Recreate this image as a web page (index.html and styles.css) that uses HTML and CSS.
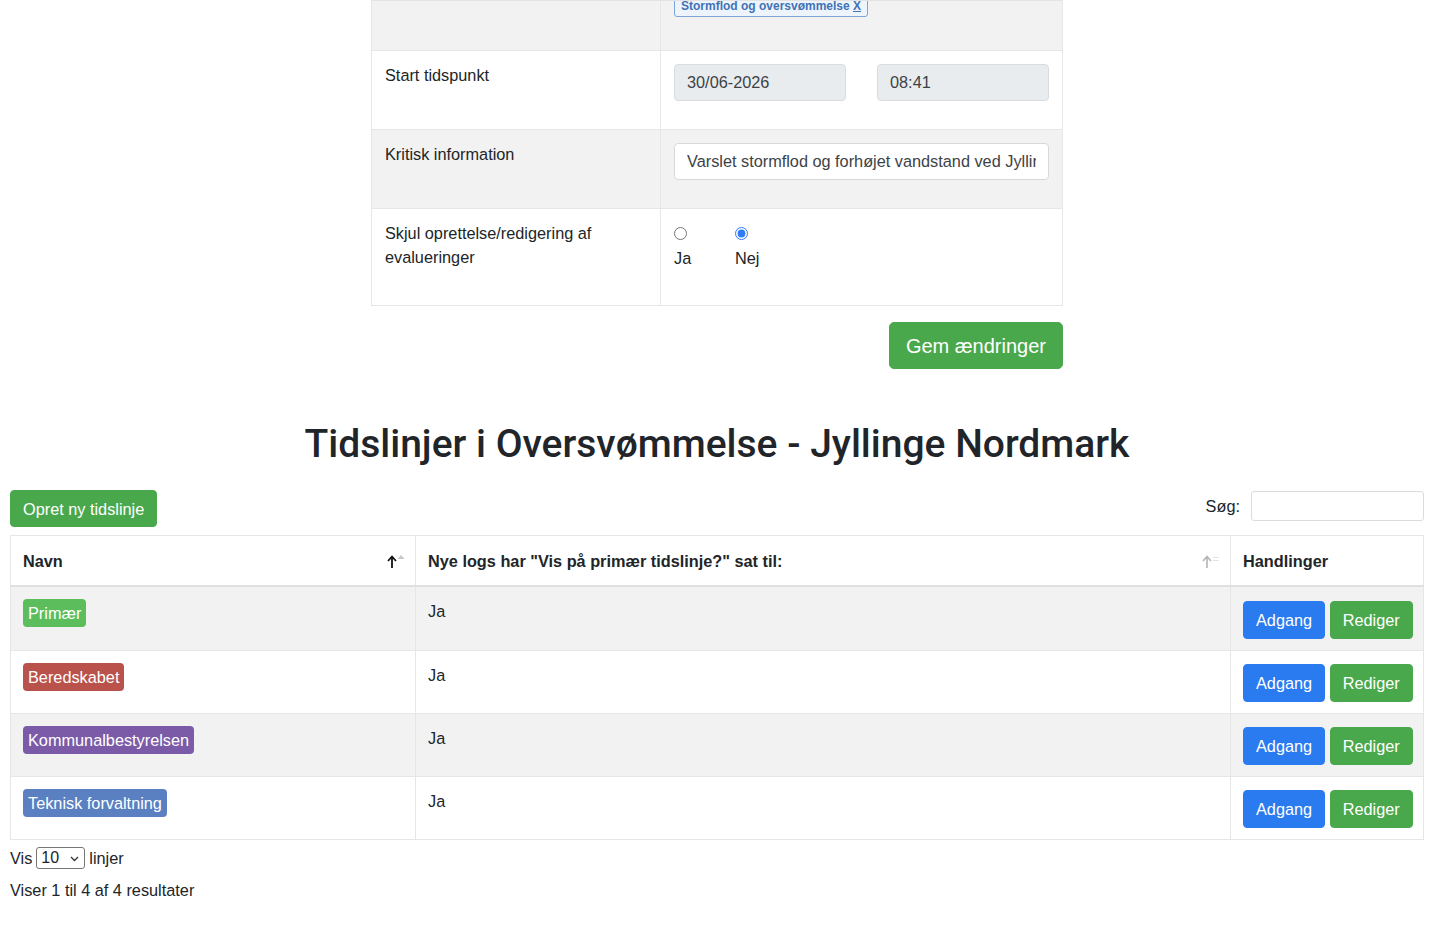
FILE: index.html
```html
<!DOCTYPE html>
<html lang="da">
<head>
<meta charset="utf-8">
<title>Tidslinjer</title>
<link rel="stylesheet" href="styles.css">
</head>
<body>
<div class="page">
  <section class="form-wrap">
    <table class="form-table">
      <colgroup><col class="col-label"><col></colgroup>
      <tbody>
        <tr class="row-tags">
          <td class="label"></td>
          <td class="value"><span class="tag">Stormflod og oversvømmelse <u>X</u></span></td>
        </tr>
        <tr>
          <td class="label">Start tidspunkt</td>
          <td class="value">
            <div class="two-col">
              <input class="field field-readonly" type="text" value="30/06-2026" readonly>
              <input class="field field-readonly" type="text" value="08:41" readonly>
            </div>
          </td>
        </tr>
        <tr>
          <td class="label">Kritisk information</td>
          <td class="value"><input class="field" type="text" value="Varslet stormflod og forhøjet vandstand ved Jyllinge Nordmark"></td>
        </tr>
        <tr class="row-radio">
          <td class="label">Skjul oprettelse/redigering af evalueringer</td>
          <td class="value">
            <div class="radios">
              <label class="radio-opt"><input type="radio" name="skjul"><span>Ja</span></label>
              <label class="radio-opt"><input type="radio" name="skjul" checked><span>Nej</span></label>
            </div>
          </td>
        </tr>
      </tbody>
    </table>
    <div class="form-actions">
      <button class="btn btn-success btn-lg" type="button">Gem ændringer</button>
    </div>
  </section>

  <h1 class="title">Tidslinjer i Oversvømmelse - Jyllinge Nordmark</h1>

  <div class="toolbar">
    <button class="btn btn-success" type="button">Opret ny tidslinje</button>
    <label class="search">Søg: <input type="search" class="search-input"></label>
  </div>

  <table class="data-table">
    <colgroup><col class="c-navn"><col><col class="c-act"></colgroup>
    <thead>
      <tr>
        <th><div class="th-inner"><span>Navn</span>
          <svg class="sort" width="20" height="16" viewBox="0 0 20 16"><path d="M6 15V4M2 8L6 3.5L10 8" fill="none" stroke="#111" stroke-width="1.8"/><path d="M11.5 6L15 2L18.5 6Z" fill="#c8c8c8"/></svg>
        </div></th>
        <th><div class="th-inner"><span>Nye logs har "Vis på primær tidslinje?" sat til:</span>
          <svg class="sort" width="20" height="16" viewBox="0 0 20 16"><path d="M6 15V4M2 8L6 3.5L10 8" fill="none" stroke="#b5b5b5" stroke-width="1.6"/><path d="M12 4.5H18M12 7.5H18" stroke="#e2e2e2" stroke-width="1"/></svg>
        </div></th>
        <th>Handlinger</th>
      </tr>
    </thead>
    <tbody>
      <tr>
        <td><span class="badge b-green">Primær</span></td>
        <td>Ja</td>
        <td class="actions"><button class="btn btn-primary" type="button">Adgang</button> <button class="btn btn-success" type="button">Rediger</button></td>
      </tr>
      <tr>
        <td><span class="badge b-red">Beredskabet</span></td>
        <td>Ja</td>
        <td class="actions"><button class="btn btn-primary" type="button">Adgang</button> <button class="btn btn-success" type="button">Rediger</button></td>
      </tr>
      <tr>
        <td><span class="badge b-purple">Kommunalbestyrelsen</span></td>
        <td>Ja</td>
        <td class="actions"><button class="btn btn-primary" type="button">Adgang</button> <button class="btn btn-success" type="button">Rediger</button></td>
      </tr>
      <tr>
        <td><span class="badge b-blue">Teknisk forvaltning</span></td>
        <td>Ja</td>
        <td class="actions"><button class="btn btn-primary" type="button">Adgang</button> <button class="btn btn-success" type="button">Rediger</button></td>
      </tr>
    </tbody>
  </table>

  <div class="length">
    <span>Vis</span>
    <span class="select-wrap">
      <select class="select"><option>10</option><option>25</option><option>50</option></select>
      <svg class="chev" width="9" height="6" viewBox="0 0 9 6"><path d="M1 1L4.5 4.5L8 1" fill="none" stroke="#333" stroke-width="1.3"/></svg>
    </span>
    <span>linjer</span>
  </div>
  <div class="info">Viser 1 til 4 af 4 resultater</div>
</div>
</body>
</html>
```

FILE: styles.css
```css
* { box-sizing: border-box; }

body {
  margin: 0;
  font-family: "Liberation Sans", Arial, sans-serif;
  font-size: 16.3px;
  line-height: 24px;
  color: #212529;
  background: #fff;
}

.page {
  padding: 0 16px 0 10px;
}

/* ---------- top form ---------- */
.form-wrap {
  width: 692px;
  margin: 0 auto;
}

.form-table {
  width: 100%;
  border-collapse: collapse;
  table-layout: fixed;
  border: 1px solid #e3e3e3;
}

.col-label { width: 289px; }

.form-table td {
  border: 1px solid #e6e6e6;
  padding: 12px 13px 29px;
  vertical-align: top;
}

.form-table td.value { padding-top: 13px; padding-bottom: 28px; }

.form-table tr:nth-child(odd) td { background: #f2f2f2; }
.form-table tr:nth-child(even) td { background: #fff; }

.form-table .row-tags td {
  height: 50px;
  padding-top: 0;
  padding-bottom: 0;
  border-top: 0;
}

.form-table .row-radio td.value { padding-bottom: 35px; }
.form-table .row-radio td.label { padding-bottom: 36px; }

.tag {
  display: block;
  width: max-content;
  margin-top: -6px;
  padding: 1px 6px;
  font-size: 12px;
  line-height: 18px;
  font-weight: 700;
  color: #3f73b6;
  background: #eef4fb;
  border: 1px solid #7fa4d6;
  border-radius: 3px;
}

.two-col {
  display: grid;
  grid-template-columns: 1fr 1fr;
  column-gap: 31px;
}

.field {
  display: block;
  width: 100%;
  height: 37px;
  padding: 6px 12px;
  font-family: inherit;
  font-size: 16.3px;
  line-height: 24px;
  color: #3d4247;
  background: #fff;
  border: 1px solid #d6d9dc;
  border-radius: 4px;
  outline: none;
}

.field-readonly {
  background: #e9ecef;
  border-color: #d9dcdf;
}

.radios {
  display: flex;
}

.radio-opt {
  display: flex;
  flex-direction: column;
  align-items: flex-start;
  width: 61px;
}

.radio-opt input {
  width: 13px;
  height: 13px;
  margin: 5px 0 6px 0;
  accent-color: #2f7cf6;
}

.form-actions {
  display: flex;
  justify-content: flex-end;
  margin-top: 16px;
}

/* ---------- buttons ---------- */
.btn {
  display: inline-block;
  font-family: inherit;
  font-size: 16.3px;
  line-height: 24px;
  padding: 6px 12px;
  border: 1px solid transparent;
  border-radius: 4px;
  color: #fff;
  cursor: pointer;
}

.btn-lg {
  height: 47px;
  font-size: 20px;
  line-height: 30px;
  padding: 7px 16px;
  border-radius: 5px;
}

.btn-success {
  background: #4aa84c;
  border-color: #4aa84c;
}

.btn-primary {
  background: #2b7bf0;
  border-color: #2b7bf0;
}

/* ---------- heading ---------- */
.title {
  margin: 51px 0 22px;
  text-align: center;
  font-family: Roboto, "Liberation Sans", Arial, sans-serif;
  font-weight: 500;
  font-size: 39px;
  line-height: 48px;
  color: #212529;
}

/* ---------- toolbar ---------- */
.toolbar {
  display: flex;
  justify-content: space-between;
  align-items: flex-start;
}

.toolbar .btn { height: 37px; padding-top: 5px; padding-bottom: 5px; }

.search {
  display: flex;
  align-items: center;
  gap: 11px;
  height: 31px;
}

.search-input {
  width: 173px;
  height: 30px;
  margin-top: 1px;
  border: 1px solid #dcdcdc;
  border-radius: 3px;
  font-family: inherit;
  font-size: 16px;
  padding: 2px 6px;
}

/* ---------- data table ---------- */
.data-table {
  width: 100%;
  margin-top: 8px;
  border-collapse: collapse;
  table-layout: fixed;
  border: 1px solid #e3e3e3;
}

.c-navn { width: 405px; }
.c-act { width: 193px; }

.data-table th,
.data-table td {
  padding: 12px;
  border: 1px solid #e6e6e6;
  text-align: left;
  vertical-align: top;
}

.data-table th {
  font-weight: 700;
  padding-top: 13px;
  border-bottom: 2px solid #e0e0e0;
  vertical-align: middle;
}

.th-inner {
  display: flex;
  align-items: center;
  justify-content: space-between;
  margin-right: -3px;
}

.sort { display: block; flex: none; }

.data-table tbody tr:nth-child(odd) td { background: #f2f2f2; }
.data-table tbody tr:nth-child(even) td { background: #fff; }

.data-table td.actions {
  vertical-align: middle;
  white-space: nowrap;
  padding-top: 13px;
  padding-bottom: 11px;
}

.data-table tbody tr:first-child td.actions { padding-top: 14px; }

.badge {
  display: inline-block;
  vertical-align: top;
  padding: 2px 5px;
  border-radius: 4px;
  color: #fff;
  line-height: 24px;
}

.b-green { background: #5cbd5c; }
.b-red { background: #b9524b; }
.b-purple { background: #7b5ba8; }
.b-blue { background: #5a80c1; }

/* ---------- footer controls ---------- */
.length {
  display: flex;
  align-items: center;
  gap: 4px;
  height: 24px;
  margin-top: 6px;
}

.select-wrap {
  position: relative;
  display: inline-block;
}

.select {
  display: block;
  width: 49px;
  height: 22px;
  padding: 0 0 0 4px;
  font-family: inherit;
  font-size: 16px;
  line-height: 20px;
  color: #212529;
  background: #fff;
  border: 1px solid #767676;
  border-radius: 3px;
  -webkit-appearance: none;
  appearance: none;
}

.chev {
  position: absolute;
  right: 6px;
  top: 9px;
  pointer-events: none;
}

.info {
  margin-top: 8px;
}
```
